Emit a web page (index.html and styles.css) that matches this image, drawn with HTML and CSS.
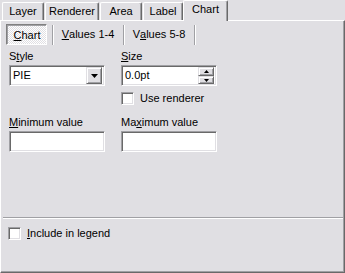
FILE: index.html
```html
<!DOCTYPE html>
<html lang="en">
<head>
  <meta charset="UTF-8" />
  <title>Layer Properties</title>
  <link rel="stylesheet" href="styles.css">
</head>
<body>

  <div class="tabs">
    <div class="tab tab-layer">Layer</div>
    <div class="tab tab-renderer">Renderer</div>
    <div class="tab tab-area">Area</div>
    <div class="tab tab-label">Label</div>
    <div class="tab tab-chart tab-active">Chart</div>
  </div>

  <div class="panel">
    <div class="subtabs">
      <div class="subtab subtab-chart subtab-on"><u>C</u>hart</div>
      <span class="vsep sep-first"></span>
      <div class="subtab"><u>V</u>alues 1-4</div>
      <span class="vsep"></span>
      <div class="subtab">V<u>a</u>lues 5-8</div>
      <span class="vsep"></span>
    </div>

    <div class="fields">
      <div class="field">
        <div class="field-label">S<u>t</u>yle</div>
        <div class="edit combo">
          <span class="edit-text">PIE</span>
          <span class="btn combo-btn">
            <svg width="7" height="4" viewBox="0 0 7 4"><polygon points="0,0 7,0 3.5,4" fill="#000"/></svg>
          </span>
        </div>
      </div>
      <div class="field">
        <div class="field-label"><u>S</u>ize</div>
        <div class="edit spin">
          <span class="edit-text">0.0pt</span>
          <span class="spin-btns">
            <span class="btn spin-up">
              <svg width="5" height="3" viewBox="0 0 5 3"><polygon points="2.5,0 5,3 0,3" fill="#000"/></svg>
            </span>
            <span class="btn spin-down">
              <svg width="5" height="3" viewBox="0 0 5 3"><polygon points="0,0 5,0 2.5,3" fill="#000"/></svg>
            </span>
          </span>
        </div>
        <div class="check check-renderer">
          <span class="box"></span>
          <span>Use renderer</span>
        </div>
      </div>
    </div>

    <div class="fields fields-range">
      <div class="field">
        <div class="field-label"><u>M</u>inimum value</div>
        <div class="edit"></div>
      </div>
      <div class="field">
        <div class="field-label">Ma<u>x</u>imum value</div>
        <div class="edit"></div>
      </div>
    </div>

    <div class="bottom">
      <div class="hsep"></div>
      <div class="check check-legend">
        <span class="box"></span>
        <span><u>I</u>nclude in legend</span>
      </div>
    </div>
  </div>

</body>
</html>
```

FILE: styles.css
```css
body {
  margin: 0;
  background-color: #e0dfe3;
  font-family: "Liberation Sans", Arial, sans-serif;
  font-size: 11px;
  line-height: 13px;
  color: #000;
  width: 345px;
  height: 273px;
  overflow: hidden;
}

u {
  text-decoration: underline;
  text-underline-offset: 1px;
}

/* top tab strip */
.tabs {
  display: flex;
  height: 20px;
  padding-left: 2px;
}

.tab {
  box-sizing: border-box;
  height: 18px;
  margin-top: 2px;
  margin-right: 1px;
  padding-top: 2px;
  text-align: center;
  background-color: #e0dfe3;
  border-top: 1px solid #fff;
  border-left: 1px solid #fff;
  border-right: 1px solid #696969;
  box-shadow: inset -1px 0 #a0a0a4;
  border-radius: 2px 2px 0 0;
}

.tab-layer { width: 42px; }
.tab-renderer { width: 54px; }
.tab-area { width: 42px; }
.tab-label { width: 40px; }
.tab-chart { width: 42px; }

.tab-active {
  position: relative;
  z-index: 1;
  height: 21px;
  margin-top: 0;
  margin-left: -1px;
  margin-right: -2px;
  width: 45px;
}

/* main page */
.panel {
  box-sizing: border-box;
  height: 253px;
  display: flex;
  flex-direction: column;
  padding: 3px 0 0 5px;
  border-top: 1px solid #fff;
  border-left: 1px solid #fff;
  border-right: 1px solid #696969;
  border-bottom: 1px solid #696969;
  box-shadow: inset -1px -1px #a0a0a4;
}

.subtabs {
  display: flex;
  align-items: center;
  height: 21px;
}

.subtab {
  box-sizing: border-box;
  width: 64px;
  height: 21px;
  display: flex;
  align-items: center;
  justify-content: center;
  margin-left: 2px;
  margin-right: 3px;
}

.subtab-chart {
  width: 41px;
  margin-left: 0;
  margin-right: 5px;
}

.subtab-on {
  padding: 1px 0 0 1px;
  border-top: 1px solid #808080;
  border-left: 1px solid #808080;
  border-right: 1px solid #fff;
  border-bottom: 1px solid #fff;
  box-shadow: inset 1px 1px #a0a0a4;
  background: repeating-conic-gradient(#fff 0 25%, #e0dfe3 0 50%) 0 0 / 2px 2px;
}

.vsep {
  width: 1px;
  height: 20px;
  border-left: 1px solid #a0a0a4;
  border-right: 1px solid #fff;
  box-sizing: border-box;
  width: 2px;
}

/* fields */
.fields {
  display: flex;
  gap: 16px;
  margin: 5px 0 0 3px;
}

.fields-range {
  margin-top: 11px;
}

.field {
  width: 96px;
}

.field-label {
  margin-bottom: 2px;
}

.edit {
  box-sizing: border-box;
  height: 21px;
  display: flex;
  align-items: center;
  background-color: #fff;
  border-top: 1px solid #a0a0a4;
  border-left: 1px solid #a0a0a4;
  border-right: 1px solid #fff;
  border-bottom: 1px solid #fff;
  box-shadow: inset 1px 1px #696969, inset -1px -1px #e0dfe3;
  padding: 2px 2px 2px 2px;
}

.edit-text {
  flex: 1;
  padding-left: 1px;
}

.btn {
  box-sizing: border-box;
  display: flex;
  align-items: center;
  justify-content: center;
  background-color: #e0dfe3;
  border-top: 1px solid #e0dfe3;
  border-left: 1px solid #e0dfe3;
  border-right: 1px solid #696969;
  border-bottom: 1px solid #696969;
  box-shadow: inset 1px 1px #fff, inset -1px -1px #a0a0a4;
}

.combo-btn {
  width: 16px;
  height: 17px;
}

.spin-btns {
  display: flex;
  flex-direction: column;
  width: 16px;
  height: 17px;
}

.spin-up {
  height: 9px;
}

.spin-down {
  height: 8px;
}

/* checkboxes */
.check {
  display: flex;
  align-items: center;
  gap: 6px;
}

.check-renderer {
  margin-top: 6px;
}

.box {
  box-sizing: border-box;
  width: 13px;
  height: 13px;
  background-color: #fff;
  border-top: 1px solid #a0a0a4;
  border-left: 1px solid #a0a0a4;
  border-right: 1px solid #fff;
  border-bottom: 1px solid #fff;
  box-shadow: inset 1px 1px #696969, inset -1px -1px #e0dfe3;
}

.bottom {
  margin-top: auto;
  margin-left: -3px;
  padding-bottom: 32px;
}

.hsep {
  height: 2px;
  box-sizing: border-box;
  border-top: 1px solid #a0a0a4;
  border-bottom: 1px solid #fff;
  margin-right: 1px;
}

.check-legend {
  margin: 8px 0 0 5px;
}
```
